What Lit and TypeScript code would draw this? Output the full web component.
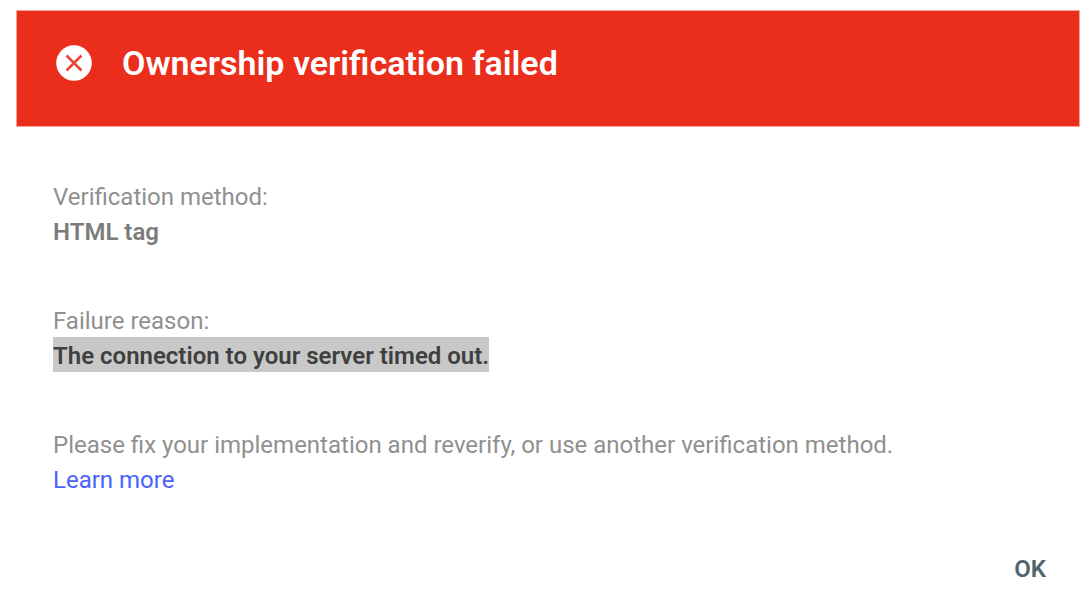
import { LitElement, html, css } from "lit";
import { customElement } from "lit/decorators.js";

@customElement("app-root")
export class AppRoot extends LitElement {
  static styles = css`
    :host {
      display: block;
      font-family: Roboto, "Liberation Sans", sans-serif;
      background: #fff;
      color: #909090;
    }
    .dialog {
      padding: 10px 10px 0 16px;
    }
    .header {
      display: flex;
      align-items: center;
      gap: 30px;
      padding: 32px 39px 43px;
      background: #eb2d1c;
      border: 1px solid #f6a29b;
      color: #fff;
    }
    .icon {
      display: block;
      flex: none;
      width: 36px;
      height: 36px;
    }
    .title {
      margin: 0;
      font-size: 34px;
      line-height: 40px;
      font-weight: 600;
    }
    .body {
      padding: 53px 37px 0;
      font-size: 24px;
      line-height: 35px;
    }
    .group {
      margin: 0 0 54px;
    }
    .label,
    .value {
      margin: 0;
    }
    .value {
      font-weight: 600;
      color: #7c7c7c;
    }
    .selected {
      padding: 5px 0 2px;
      background: #c8c8c8;
      color: #3f3f3f;
    }
    .link {
      color: #4a62fd;
      text-decoration: none;
    }
    .actions {
      display: flex;
      justify-content: flex-end;
      padding: 0 34px;
    }
    .ok {
      border: 0;
      padding: 0;
      background: none;
      color: #4f666f;
      font: inherit;
      font-size: 24px;
      line-height: 35px;
      font-weight: 600;
      cursor: pointer;
    }
  `;

  render() {
    return html`
      <section class="dialog" role="alertdialog" aria-labelledby="title">
        <header class="header">
          <svg class="icon" viewBox="0 0 36 36" aria-hidden="true">
            <circle cx="18" cy="18" r="17.8" fill="#fff" />
            <path d="M10.5 10.5l15 15M25.5 10.5l-15 15" stroke="#eb4638" stroke-width="2.6" />
          </svg>
          <h1 class="title" id="title">Ownership verification failed</h1>
        </header>
        <div class="body">
          <div class="group">
            <p class="label">Verification method:</p>
            <p class="value">HTML tag</p>
          </div>
          <div class="group">
            <p class="label">Failure reason:</p>
            <p class="value"><span class="selected">The connection to your server timed out.</span></p>
          </div>
          <div class="group">
            <p class="label">Please fix your implementation and reverify, or use another verification method.</p>
            <a class="link" href="#">Learn more</a>
          </div>
        </div>
        <footer class="actions">
          <button class="ok" type="button">OK</button>
        </footer>
      </section>
    `;
  }
}
